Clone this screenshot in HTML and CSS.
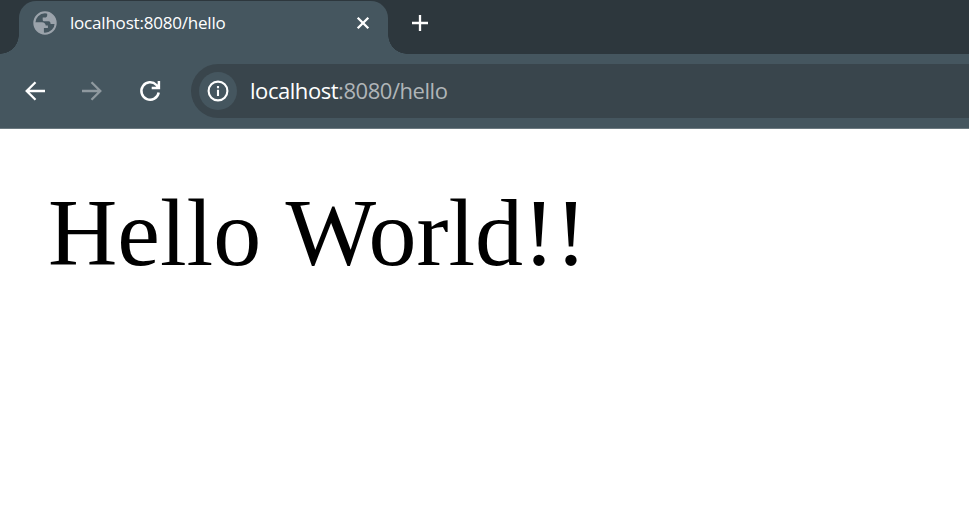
FILE: index.html
```html
<!DOCTYPE html>
<html lang="en">
<head>
<meta charset="utf-8">
<title>localhost:8080/hello</title>
<link rel="stylesheet" href="styles.css">
</head>
<body>
<header class="chrome">
  <div class="tabstrip">
    <div class="tab">
      <svg class="globe" viewBox="0 0 24 24"><circle cx="12" cy="12" r="10.7"/><path class="land" d="M1.5 11.3H9c2.2 0 3.7 1.4 3.7 3.3h2.2v2.5h-4v5.3C5 22.5 1 17.2 1.5 11.3ZM14.2 1.5v2.7c0 1.5-1 2.4-2.5 2.4h-2v2.2c0 1 .7 1.5 1.8 1.5h4.1c1.4 0 2 1.2 2 2.7h5.2C23.3 7 19.5 2.3 14.2 1.5Z"/></svg>
      <span class="title">localhost:8080/hello</span>
      <svg class="close" viewBox="0 0 14 14"><path d="M1.7 1.7 12.3 12.3M12.3 1.7 1.7 12.3"/></svg>
    </div>
    <svg class="plus" viewBox="0 0 18 18"><path d="M9 1v16M1 9h16"/></svg>
  </div>
  <nav class="toolbar">
    <svg class="nav" viewBox="0 0 24 24"><path d="M22 12H3.5M12.500 3.200 3.700 12l8.800 8.800"/></svg>
    <svg class="nav forward" viewBox="0 0 24 24"><path d="M2 12h18.500M11.500 3.200l8.800 8.800-8.800 8.800"/></svg>
    <svg class="nav reload" viewBox="0 0 24 24"><path d="M20.700 13.500A8.700 8.700 0 1 1 18.400 6l2 2.500M20.900 2v7h-7.200"/></svg>
    <div class="address">
      <span class="info"><svg viewBox="0 0 22 22"><circle cx="11" cy="11" r="9.4"/><path d="M11 9.700v6.200M11 6v2.200"/></svg></span>
      <span class="url"><b>localhost</b>:8080/hello</span>
    </div>
  </nav>
</header>
<main>Hello World!!</main>
</body>
</html>
```
FILE: styles.css
```css
body { margin: 0; background: #fff; overflow: hidden; }
svg { display: block; flex: none; fill: none; stroke: #fff; }
.chrome { background: #45565f; font-family: "Open Sans", sans-serif; color: #fff; }
.tabstrip {
  box-sizing: border-box;
  height: 54px;
  padding: 1px 0 0 19px;
  display: flex;
  background: #2d373d;
}
.tab {
  position: relative;
  box-sizing: border-box;
  width: 369px;
  height: 53px;
  padding: 0 18px 9px 14px;
  display: flex;
  align-items: center;
  background: #45565f;
  border-radius: 17px 17px 0 0;
}
.tab::before, .tab::after {
  content: "";
  position: absolute;
  bottom: 0;
  width: 19px;
  height: 19px;
}
.tab::before { right: 100%; background: radial-gradient(circle at 0 0, transparent 18.5px, #45565f 19px); }
.tab::after { left: 100%; background: radial-gradient(circle at 100% 0, transparent 18.5px, #45565f 19px); }
.globe { width: 24px; height: 24px; stroke: none; }
.globe circle { stroke: #9ba3ab; stroke-width: 2; }
.globe .land { fill: #9ba3ab; }
.title { margin: 0 0 2px 13px; font-size: 17px; letter-spacing: -.2px; white-space: nowrap; }
.close { width: 14px; height: 14px; margin-left: auto; stroke-width: 2.3; }
.plus { width: 18px; height: 18px; margin: 13px 0 0 23px; stroke-width: 2.3; }
.toolbar {
  box-sizing: border-box;
  height: 75px;
  padding: 10px 0 10px 23px;
  display: flex;
  align-items: center;
  border-bottom: 1px solid #6b7980;
}
.nav { width: 24px; height: 24px; margin-right: 33px; stroke-width: 2.3; }
.forward { stroke: #8f999f; margin-right: 34px; }
.reload { margin-right: 29px; stroke-width: 2.5; }
.address {
  flex: 1;
  height: 54px;
  display: flex;
  align-items: center;
  background: #39454c;
  border-radius: 27px 0 0 27px;
}
.info {
  width: 38px;
  height: 38px;
  margin-left: 8px;
  display: grid;
  place-items: center;
  border-radius: 50%;
  background: #45565f;
}
.info svg { width: 22px; height: 22px; stroke-width: 2.1; }
.url { margin: 0 0 2px 13px; font-size: 22px; letter-spacing: -.45px; color: #b0b5b8; }
.url b { font-weight: 400; color: #fff; }
main {
  padding: 49px 48px;
  font: 96px/110px "Liberation Serif", serif;
  word-spacing: 2px;
  color: #000;
}
```
